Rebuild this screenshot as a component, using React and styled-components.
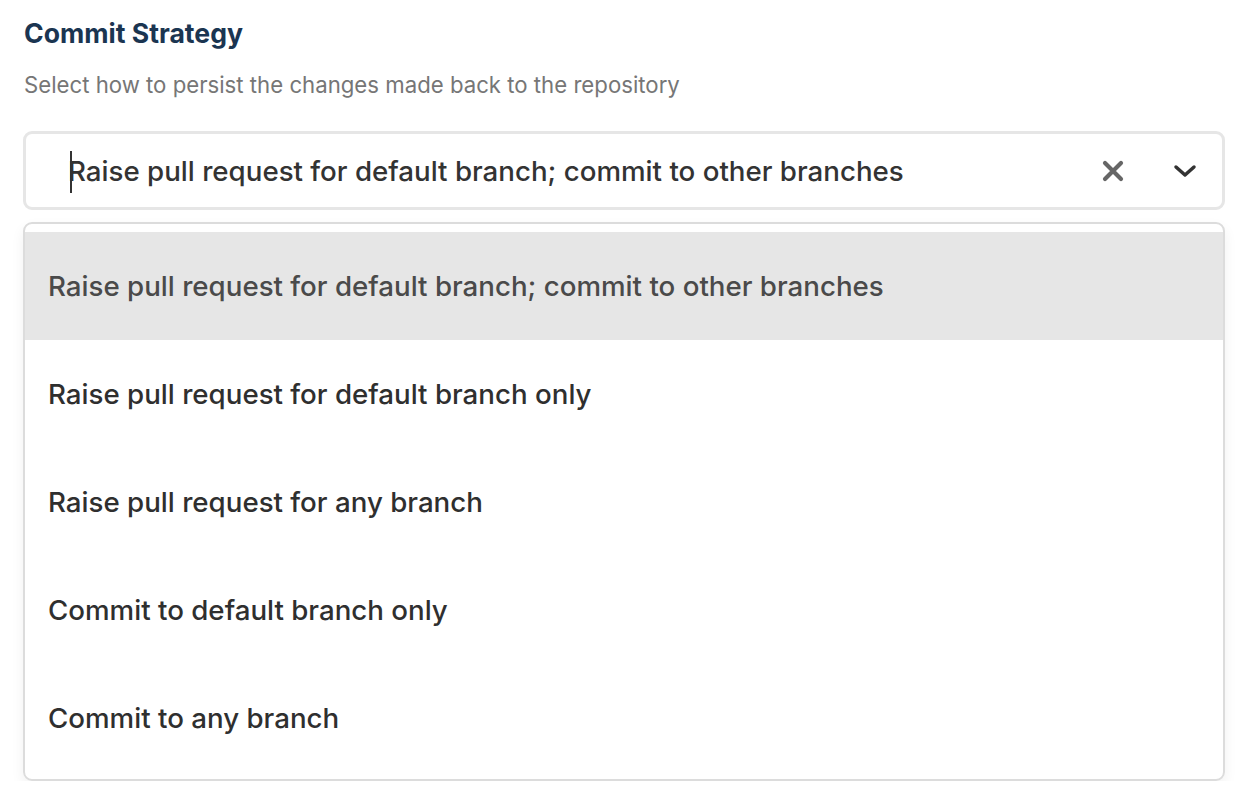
import React, { useState } from "react";
import styled, { createGlobalStyle } from "styled-components";

const GlobalStyle = createGlobalStyle`
  body {
    margin: 0;
    background: #fff;
    font-family: Inter, "Noto Sans", sans-serif;
  }
`;

const Page = styled.div`
  padding: 16px 29px 0 23px;
  width: 1254px;
  box-sizing: border-box;
`;

const Title = styled.h2`
  margin: 0 0 0 1px;
  font-size: 26.6px;
  font-weight: 700;
  line-height: 34px;
  color: #1b3551;
`;

const Hint = styled.p`
  margin: 20px 0 0 1px;
  font-size: 22.2px;
  line-height: 30px;
  color: #767676;
`;

const Control = styled.div`
  margin-top: 31px;
  height: 79px;
  box-sizing: border-box;
  border: 3px solid #e6e6e6;
  border-radius: 9px;
  display: flex;
  align-items: center;
  padding: 1px 17px 0 42px;
`;

const Value = styled.div`
  flex: 1;
  font-size: 27.7px;
  font-weight: 500;
  color: #333;
  position: relative;

  &::before {
    content: "";
    position: absolute;
    left: 2px;
    top: -3px;
    bottom: -5px;
    width: 2px;
    background: #333;
  }
`;

const IconButton = styled.span`
  display: flex;
  align-items: center;
  justify-content: center;
  width: 40px;
  margin-left: ${(p) => p.gap || 0}px;
  color: ${(p) => p.color};
`;

const Menu = styled.div`
  margin-top: 12px;
  border: 2px solid #dcdcdc;
  border-radius: 9px;
  padding: 8px 0 7px;
  box-shadow: 0 6px 14px rgba(0, 0, 0, 0.06);
`;

const Option = styled.div`
  height: 108px;
  display: flex;
  align-items: center;
  padding-left: 23px;
  font-size: 27.7px;
  font-weight: 500;
  color: ${(p) => (p.active ? "#4a4a4a" : "#2f2f2f")};
  background: ${(p) => (p.active ? "#e6e6e6" : "transparent")};
`;

const options = [
  "Raise pull request for default branch; commit to other branches",
  "Raise pull request for default branch only",
  "Raise pull request for any branch",
  "Commit to default branch only",
  "Commit to any branch",
];

export default function App() {
  const [selected] = useState(0);
  return (
    <Page>
      <GlobalStyle />
      <Title>Commit Strategy</Title>
      <Hint>Select how to persist the changes made back to the repository</Hint>
      <Control>
        <Value>{options[selected]}</Value>
        <IconButton color="#666">
          <svg width="22" height="22" viewBox="0 0 22 22">
            <path d="M3 3 L19 19 M19 3 L3 19" stroke="currentColor" strokeWidth="4.2" strokeLinecap="round" />
          </svg>
        </IconButton>
        <IconButton color="#333" gap={32}>
          <svg width="24" height="16" viewBox="0 0 24 16">
            <path d="M3 4 L12 12 L21 4" fill="none" stroke="currentColor" strokeWidth="3.5" strokeLinecap="round" strokeLinejoin="round" />
          </svg>
        </IconButton>
      </Control>
      <Menu>
        {options.map((o, i) => (
          <Option key={o} active={i === selected}>
            {o}
          </Option>
        ))}
      </Menu>
    </Page>
  );
}
